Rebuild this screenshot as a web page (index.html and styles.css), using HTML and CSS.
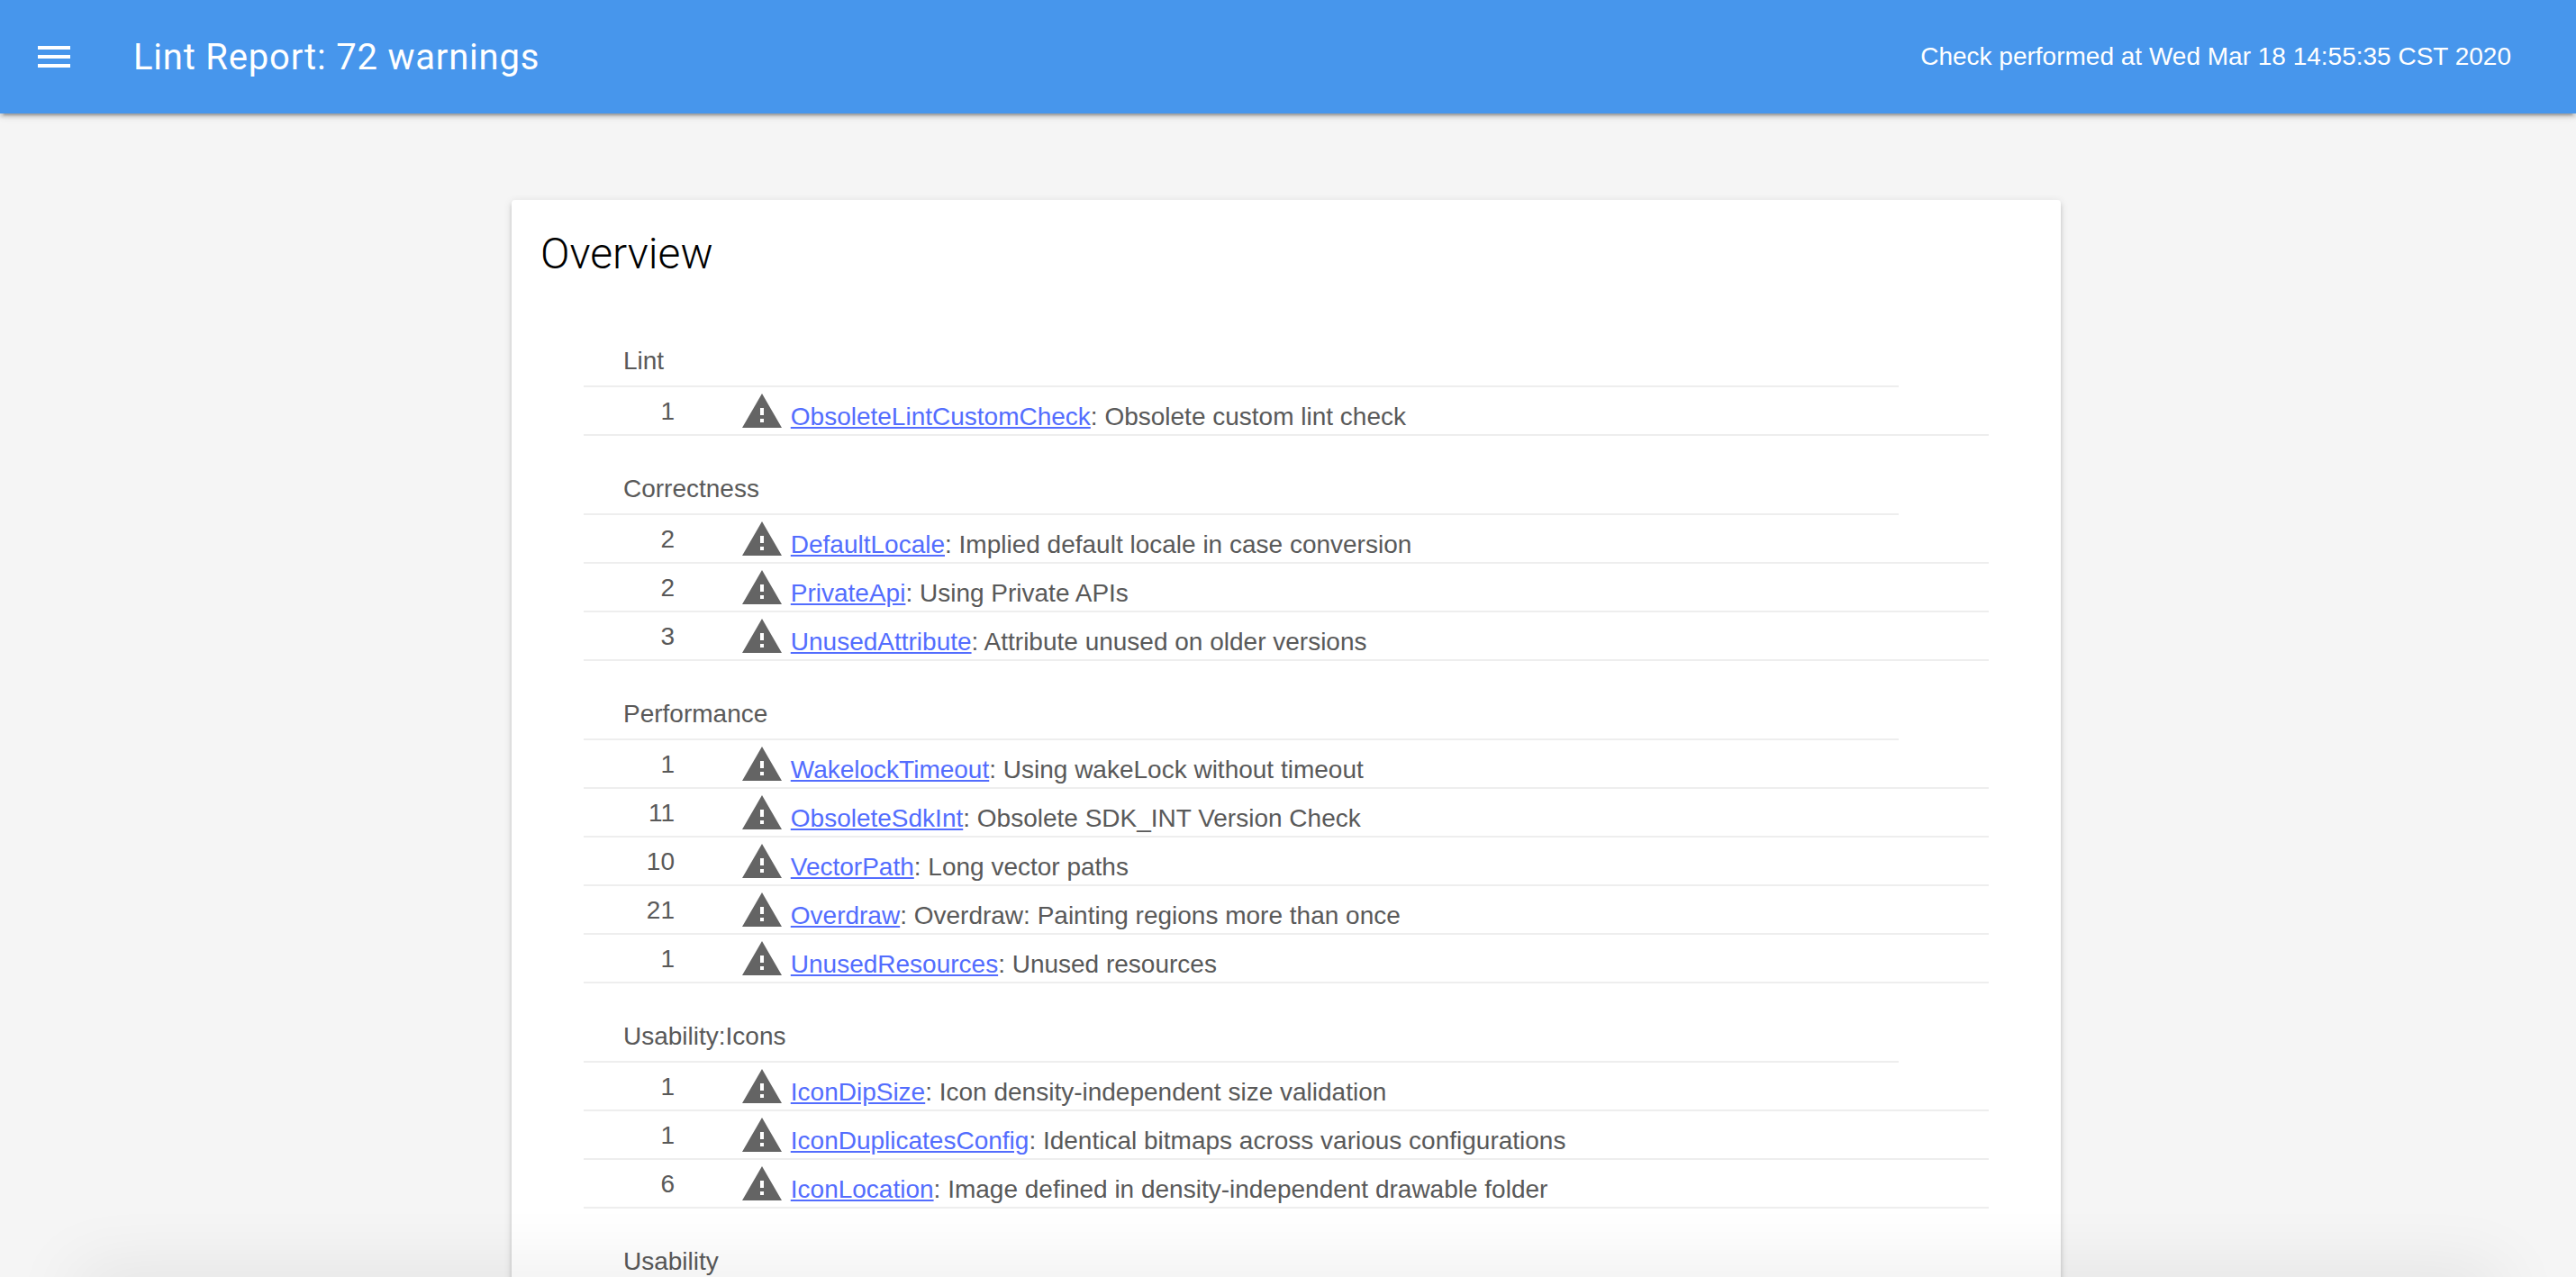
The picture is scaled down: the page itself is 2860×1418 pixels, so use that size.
FILE: index.html
```html
<!DOCTYPE html>
<html lang="en">
<head>
  <meta charset="UTF-8" />
  <title>Lint Report</title>
  <link rel="stylesheet" href="styles.css">
</head>
<body>
  <svg class="defs" width="0" height="0">
    <symbol id="warn" viewBox="0 0 24 24"><path d="M1 21h22L12 2 1 21zm12-3h-2v-2h2v2zm0-4h-2v-4h2v4z"/></symbol>
  </svg>

  <header class="topbar">
    <svg class="menu-icon" viewBox="0 0 24 24"><path d="M3 18h18v-2H3v2zm0-5h18v-2H3v2zm0-7v2h18V6H3z"/></svg>
    <span class="title">Lint Report: 72 warnings</span>
    <span class="checked">Check performed at Wed Mar 18 14:55:35 CST 2020</span>
  </header>

  <main class="card">
    <h2>Overview</h2>

    <section class="group">
      <div class="group-title">Lint</div>
      <div class="row"><span class="count">1</span><span class="issue"><svg class="warn"><use href="#warn"/></svg> <a href="#">ObsoleteLintCustomCheck</a>: Obsolete custom lint check</span></div>
    </section>

    <section class="group">
      <div class="group-title">Correctness</div>
      <div class="row"><span class="count">2</span><span class="issue"><svg class="warn"><use href="#warn"/></svg> <a href="#">DefaultLocale</a>: Implied default locale in case conversion</span></div>
      <div class="row"><span class="count">2</span><span class="issue"><svg class="warn"><use href="#warn"/></svg> <a href="#">PrivateApi</a>: Using Private APIs</span></div>
      <div class="row"><span class="count">3</span><span class="issue"><svg class="warn"><use href="#warn"/></svg> <a href="#">UnusedAttribute</a>: Attribute unused on older versions</span></div>
    </section>

    <section class="group">
      <div class="group-title">Performance</div>
      <div class="row"><span class="count">1</span><span class="issue"><svg class="warn"><use href="#warn"/></svg> <a href="#">WakelockTimeout</a>: Using wakeLock without timeout</span></div>
      <div class="row"><span class="count">11</span><span class="issue"><svg class="warn"><use href="#warn"/></svg> <a href="#">ObsoleteSdkInt</a>: Obsolete SDK_INT Version Check</span></div>
      <div class="row"><span class="count">10</span><span class="issue"><svg class="warn"><use href="#warn"/></svg> <a href="#">VectorPath</a>: Long vector paths</span></div>
      <div class="row"><span class="count">21</span><span class="issue"><svg class="warn"><use href="#warn"/></svg> <a href="#">Overdraw</a>: Overdraw: Painting regions more than once</span></div>
      <div class="row"><span class="count">1</span><span class="issue"><svg class="warn"><use href="#warn"/></svg> <a href="#">UnusedResources</a>: Unused resources</span></div>
    </section>

    <section class="group">
      <div class="group-title">Usability:Icons</div>
      <div class="row"><span class="count">1</span><span class="issue"><svg class="warn"><use href="#warn"/></svg> <a href="#">IconDipSize</a>: Icon density-independent size validation</span></div>
      <div class="row"><span class="count">1</span><span class="issue"><svg class="warn"><use href="#warn"/></svg> <a href="#">IconDuplicatesConfig</a>: Identical bitmaps across various configurations</span></div>
      <div class="row"><span class="count">6</span><span class="issue"><svg class="warn"><use href="#warn"/></svg> <a href="#">IconLocation</a>: Image defined in density-independent drawable folder</span></div>
    </section>

    <section class="group">
      <div class="group-title">Usability</div>
    </section>
  </main>

  <div class="bottom-shadow"></div>
</body>
</html>
```

FILE: styles.css
```css
html, body {
  height: 100%;
  overflow: hidden;
}
body {
  margin: 0;
  background-color: #f5f5f5;
  font-family: "Liberation Sans", Arial, sans-serif;
  font-size: 28px;
  color: #595959;
}
.defs {
  display: block;
  height: 0;
}
.topbar {
  display: flex;
  align-items: center;
  height: 126px;
  padding: 0 72px 0 36px;
  background-color: #4796ec;
  color: #fff;
  box-shadow: 0 4px 4px 0 rgba(0,0,0,0.14), 0 6px 2px -4px rgba(0,0,0,0.2), 0 2px 10px 0 rgba(0,0,0,0.12);
}
.menu-icon {
  width: 48px;
  height: 48px;
  fill: #fff;
}
.title {
  margin-left: 64px;
  font-family: Roboto, sans-serif;
  font-size: 40px;
  letter-spacing: 0.8px;
}
.checked {
  margin-left: auto;
}
.card {
  width: 1720px;
  margin: 96px 0 0 568px;
  padding: 32px 0 0 32px;
  box-sizing: border-box;
  background-color: #fff;
  border-radius: 4px;
  box-shadow: 0 4px 4px 0 rgba(0,0,0,0.14), 0 6px 2px -4px rgba(0,0,0,0.2), 0 2px 10px 0 rgba(0,0,0,0.12);
}
h2 {
  margin: 0 0 32px;
  font-family: Roboto, sans-serif;
  font-size: 48px;
  font-weight: 300;
  line-height: 56px;
  color: #000;
}
.group {
  width: 1560px;
  margin-left: 48px;
}
.group-title {
  width: 1460px;
  padding: 43px 0 11px 44px;
  box-sizing: border-box;
  line-height: 32px;
  border-bottom: 2px solid #eee;
}
.row {
  display: flex;
  align-items: center;
  height: 54px;
  box-sizing: border-box;
  border-bottom: 2px solid #eee;
}
.count {
  width: 101px;
  padding-top: 1px;
  text-align: right;
}
.issue {
  align-self: flex-start;
  margin: 3px 0 0 73px;
  white-space: nowrap;
}
.warn {
  width: 48px;
  height: 48px;
  fill: #646464;
  vertical-align: -9px;
}
a {
  color: #536dfe;
}
.bottom-shadow {
  position: fixed;
  left: 85px;
  right: 85px;
  bottom: -40px;
  height: 40px;
  box-shadow: 0 0 80px 0 rgba(0,0,0,0.12);
}
```
